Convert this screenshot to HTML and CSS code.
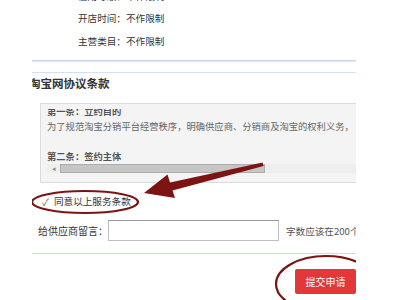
FILE: index.html
```html
<!DOCTYPE html>
<html lang="zh-CN">
<head>
<meta charset="utf-8">
<title>淘宝网协议条款</title>
<link rel="stylesheet" href="styles.css">
</head>
<body>
<div class="frame">
  <div class="info">
    <div class="info-row info-row-first">信用等级：不作限制</div>
    <div class="info-row">开店时间：不作限制</div>
    <div class="info-row">主营类目：不作限制</div>
  </div>
  <div class="rule-double"></div>
  <div class="rule"></div>
  <h2 class="title">淘宝网协议条款</h2>
  <div class="terms">
    <div class="terms-view">
      <div class="terms-content">
        <p class="terms-head">第一条：立约目的</p>
        <p>为了规范淘宝分销平台经营秩序，明确供应商、分销商及淘宝的权利义务，</p>
        <p>&nbsp;</p>
        <p class="terms-head">第二条：签约主体</p>
      </div>
    </div>
    <div class="hscroll">
      <span class="hscroll-arrow">◂</span>
      <span class="hscroll-thumb"></span>
    </div>
  </div>
  <label class="agree"><span class="check">✓</span>同意以上服务条款</label>
  <div class="message">
    <span class="message-label">给供应商留言：</span>
    <span class="message-input"></span>
    <span class="message-hint">字数应该在200个字以内</span>
  </div>
  <div class="rule rule-bottom"></div>
  <div class="actions">
    <button class="submit" type="button">提交申请</button>
  </div>
  <svg class="marks" viewBox="32 0 324 300" width="324" height="300">
    <ellipse cx="85" cy="202" rx="53" ry="11" fill="none" stroke="#7c1414" stroke-width="2.2"/>
    <ellipse cx="326" cy="284" rx="50" ry="28" fill="none" stroke="#7c1414" stroke-width="2.2"/>
    <polygon points="144,193 167.5,174.5 170,182.5 262.5,162.5 263.5,166 172.5,190.5 175,198" fill="#7c1414"/>
  </svg>
</div>
</body>
</html>
```
FILE: styles.css
```css
* { box-sizing: border-box; }
body {
  margin: 0;
  background: #fff;
  font-family: "Noto Sans CJK SC", "Liberation Sans", sans-serif;
  color: #333;
}
.frame {
  position: relative;
  width: 324px;
  height: 300px;
  margin-left: 32px;
  overflow: hidden;
}
.info {
  margin-top: -14px;
  padding-left: 46px;
  font-size: 9.6px;
  color: #333;
}
.info-row {
  height: 23px;
  line-height: 23px;
}
.info-row-first {
  height: 21px;
  line-height: 20px;
}
.rule-double {
  margin-top: 7px;
  height: 2px;
  border-top: 1px solid #c8d8f2;
  border-bottom: 1px solid #e4e7ec;
}
.rule {
  margin-top: 10px;
  height: 1px;
  background: #d2e0f6;
}
.title {
  margin: 0 0 0 -3px;
  line-height: 20px;
  font-size: 11.5px;
  font-weight: bold;
  color: #333;
}
.terms {
  margin-top: 10px;
  margin-left: 8px;
  width: 340px;
  height: 80px;
  padding-top: 5px;
  border: 1px solid #dcdcdc;
  background: #f4f4f4;
}
.terms-view {
  height: 55px;
  overflow: hidden;
  padding-left: 6px;
}
.terms-content {
  margin-top: -5.5px;
  font-size: 9.3px;
  line-height: 15px;
  color: #666;
  white-space: nowrap;
}
.terms-content p { margin: 0; }
.terms-head { color: #555; font-weight: bold; }
.hscroll {
  display: flex;
  align-items: center;
  margin-left: 6px;
  height: 9px;
  background: #eeeeee;
}
.hscroll-arrow {
  width: 13px;
  font-size: 7px;
  line-height: 9px;
  color: #888;
  text-align: center;
}
.hscroll-thumb {
  width: 205px;
  height: 9px;
  background: #c6c6c6;
  border: 1px solid #adadad;
}
.agree {
  display: flex;
  align-items: center;
  margin-top: 8px;
  padding-left: 10px;
  height: 20px;
  font-size: 9.6px;
  color: #333;
}
.check {
  width: 12px;
  font-size: 10px;
  color: #666;
}
.message {
  display: flex;
  align-items: center;
  margin-top: 9px;
  padding-left: 6px;
  height: 21px;
  white-space: nowrap;
}
.message-label {
  width: 71px;
  font-size: 10px;
  color: #333;
}
.message-input {
  width: 171px;
  height: 21px;
  border: 1px solid #bdbdbd;
  border-top-color: #999;
  background: #fff;
  flex: none;
}
.message-hint {
  margin-left: 7px;
  font-size: 9.6px;
  color: #555;
}
.rule-bottom {
  margin-top: 12px;
  background: #cbd9ee;
}
.actions {
  display: flex;
  justify-content: flex-end;
  margin-top: 15px;
}
.submit {
  width: 61px;
  height: 25px;
  padding: 0;
  border: none;
  border-radius: 2px;
  background: #e2373b;
  color: #fff;
  font-family: inherit;
  font-size: 10px;
}
.marks {
  position: absolute;
  left: 0;
  top: 0;
  pointer-events: none;
}
```
